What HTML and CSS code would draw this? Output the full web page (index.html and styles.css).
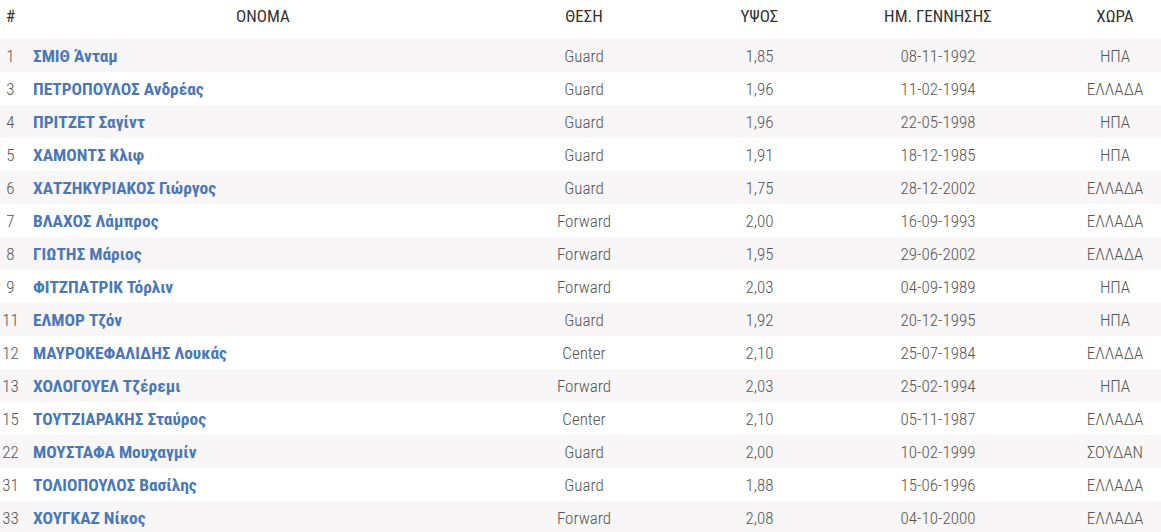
FILE: index.html
```html
<!DOCTYPE html>
<html lang="el">
<head>
<meta charset="utf-8">
<title>Ρόστερ</title>
<link rel="stylesheet" href="styles.css">
</head>
<body>
<table class="roster">
  <colgroup>
    <col class="c-num">
    <col class="c-name">
    <col class="c-pos">
    <col class="c-h">
    <col class="c-dob">
    <col class="c-cty">
  </colgroup>
  <thead>
    <tr>
      <th class="num">#</th>
      <th>ΟΝΟΜΑ</th>
      <th>ΘΕΣΗ</th>
      <th>ΥΨΟΣ</th>
      <th>ΗΜ. ΓΕΝΝΗΣΗΣ</th>
      <th class="cty">ΧΩΡΑ</th>
    </tr>
  </thead>
  <tbody>
    <tr><td class="num">1</td><td class="name">ΣΜΙΘ Άνταμ</td><td>Guard</td><td>1,85</td><td>08-11-1992</td><td class="cty">ΗΠΑ</td></tr>
    <tr><td class="num">3</td><td class="name">ΠΕΤΡΟΠΟΥΛΟΣ Ανδρέας</td><td>Guard</td><td>1,96</td><td>11-02-1994</td><td class="cty">ΕΛΛΑΔΑ</td></tr>
    <tr><td class="num">4</td><td class="name">ΠΡΙΤΖΕΤ Σαγίντ</td><td>Guard</td><td>1,96</td><td>22-05-1998</td><td class="cty">ΗΠΑ</td></tr>
    <tr><td class="num">5</td><td class="name">ΧΑΜΟΝΤΣ Κλιφ</td><td>Guard</td><td>1,91</td><td>18-12-1985</td><td class="cty">ΗΠΑ</td></tr>
    <tr><td class="num">6</td><td class="name">ΧΑΤΖΗΚΥΡΙΑΚΟΣ Γιώργος</td><td>Guard</td><td>1,75</td><td>28-12-2002</td><td class="cty">ΕΛΛΑΔΑ</td></tr>
    <tr><td class="num">7</td><td class="name">ΒΛΑΧΟΣ Λάμπρος</td><td>Forward</td><td>2,00</td><td>16-09-1993</td><td class="cty">ΕΛΛΑΔΑ</td></tr>
    <tr><td class="num">8</td><td class="name">ΓΙΩΤΗΣ Μάριος</td><td>Forward</td><td>1,95</td><td>29-06-2002</td><td class="cty">ΕΛΛΑΔΑ</td></tr>
    <tr><td class="num">9</td><td class="name">ΦΙΤΖΠΑΤΡΙΚ Τόρλιν</td><td>Forward</td><td>2,03</td><td>04-09-1989</td><td class="cty">ΗΠΑ</td></tr>
    <tr><td class="num">11</td><td class="name">ΕΛΜΟΡ Τζόν</td><td>Guard</td><td>1,92</td><td>20-12-1995</td><td class="cty">ΗΠΑ</td></tr>
    <tr><td class="num">12</td><td class="name">ΜΑΥΡΟΚΕΦΑΛΙΔΗΣ Λουκάς</td><td>Center</td><td>2,10</td><td>25-07-1984</td><td class="cty">ΕΛΛΑΔΑ</td></tr>
    <tr><td class="num">13</td><td class="name">ΧΟΛΟΓΟΥΕΛ Τζέρεμι</td><td>Forward</td><td>2,03</td><td>25-02-1994</td><td class="cty">ΗΠΑ</td></tr>
    <tr><td class="num">15</td><td class="name">ΤΟΥΤΖΙΑΡΑΚΗΣ Σταύρος</td><td>Center</td><td>2,10</td><td>05-11-1987</td><td class="cty">ΕΛΛΑΔΑ</td></tr>
    <tr><td class="num">22</td><td class="name">ΜΟΥΣΤΑΦΑ Μουχαγμίν</td><td>Guard</td><td>2,00</td><td>10-02-1999</td><td class="cty">ΣΟΥΔΑΝ</td></tr>
    <tr><td class="num">31</td><td class="name">ΤΟΛΙΟΠΟΥΛΟΣ Βασίλης</td><td>Guard</td><td>1,88</td><td>15-06-1996</td><td class="cty">ΕΛΛΑΔΑ</td></tr>
    <tr><td class="num">33</td><td class="name">ΧΟΥΓΚΑΖ Νίκος</td><td>Forward</td><td>2,08</td><td>04-10-2000</td><td class="cty">ΕΛΛΑΔΑ</td></tr>
  </tbody>
</table>
</body>
</html>
```
FILE: styles.css
```css
html, body {
  margin: 0;
  padding: 0;
  background: #ffffff;
}
body {
  font-family: "Roboto Condensed", "Liberation Sans Narrow", "DejaVu Sans Condensed", Roboto, sans-serif;
  font-stretch: condensed;
  font-size: 17px;
  color: #555555;
}
.roster {
  width: 1161px;
  border-collapse: collapse;
  table-layout: fixed;
}
.c-num { width: 21px; }
.c-name { width: 484px; }
.c-pos { width: 158px; }
.c-h { width: 193px; }
.c-dob { width: 164px; }
.c-cty { width: 141px; }

.roster th {
  height: 39px;
  padding: 0 0 7px 0;
  box-sizing: border-box;
  font-weight: 400;
  color: #333333;
  text-align: center;
  vertical-align: middle;
  white-space: nowrap;
}
.roster td {
  height: 33px;
  padding: 0;
  text-align: center;
  vertical-align: middle;
  white-space: nowrap;
  font-weight: 300;
}
.roster tbody tr:nth-child(odd) td {
  background: #f8f6f7;
}
.roster .num {
  text-align: center;
}
.roster td.name {
  text-align: left;
  padding-left: 12px;
  font-size: 17.4px;
  font-weight: 700;
  color: #4a78b7;
}
.roster .cty {
  padding-left: 49px;
}
```
